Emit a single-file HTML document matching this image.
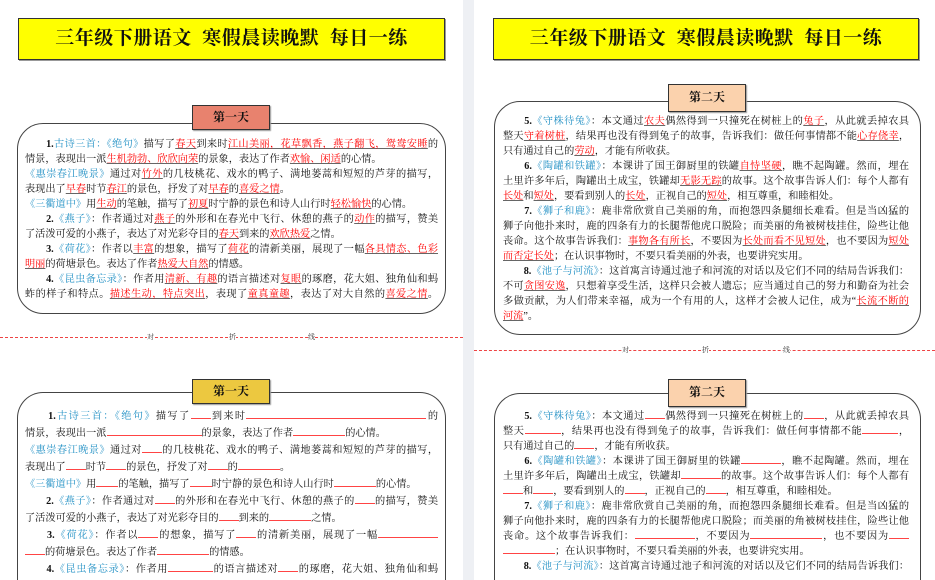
<!DOCTYPE html>
<html><head><meta charset="utf-8"><style>
*{margin:0;padding:0;box-sizing:border-box}
html,body{width:935px;height:580px;overflow:hidden}
body{background:#fff;position:relative;font-family:"Liberation Serif","Noto Serif CJK SC",serif;color:#111}
.strip{position:absolute;left:463px;top:0;width:11px;height:580px;background:#eef0f4}
.title{position:absolute;height:42px;background:#ffff00;border:1.5px solid #333;box-shadow:1px 1px 0 #999;font-size:19px;font-weight:bold;text-align:center;line-height:40px;letter-spacing:0.5px}
.label{position:absolute;width:78px;height:25px;border:1.5px solid #333;box-shadow:1px 1px 1px #999;font-size:12px;font-weight:bold;text-align:center;line-height:22px;z-index:2}
.panel{position:absolute;border:1.5px solid #444;border-radius:26px;background:#fff}
.panel.open{border-bottom:none;border-radius:26px 26px 0 0}
.txt{position:absolute;font-size:10.2px;overflow:hidden}
.txt div{white-space:nowrap;text-align:justify;text-align-last:justify}
.txt div.l{text-align-last:left}
.b{color:#1f8fc4}
.r{color:#f00;text-decoration:underline;text-decoration-color:#666}
.u{display:inline-block;border-bottom:1px solid #f44;height:10px;vertical-align:baseline}
.dash{position:absolute;height:0;border-top:1px dashed #e44}
.fold{position:absolute;font-size:7px;color:#333}
</style></head><body>
<div class="strip"></div>

<div class="title" style="left:18px;top:18px;width:427px">三年级下册语文&nbsp;&nbsp;寒假晨读晚默&nbsp;&nbsp;每日一练</div>
<div class="label" style="left:192px;top:105px;background:#e8826e">第一天</div>
<div class="panel" style="left:17px;top:123px;width:429px;height:191px"></div>
<div class="txt" style="left:25px;top:137px;width:413px;line-height:15px">
<div>　　<b>1.</b><span class="b">古诗三首：《绝句》</span>描写了<span class="r">春天</span>到来时<span class="r">江山美丽，花草飘香，燕子翻飞，鸳鸯安睡</span>的</div>
<div class="l">情景，表现出一派<span class="r">生机勃勃、欣欣向荣</span>的景象，表达了作者<span class="r">欢愉、闲适</span>的心情。</div>
<div><span class="b">《惠崇春江晚景》</span>通过对<span class="r">竹外</span>的几枝桃花、戏水的鸭子、满地蒌蒿和短短的芦芽的描写，</div>
<div class="l">表现出了<span class="r">早春</span>时节<span class="r">春江</span>的景色，抒发了对<span class="r">早春</span>的<span class="r">喜爱之情</span>。</div>
<div class="l"><span class="b">《三衢道中》</span>用<span class="r">生动</span>的笔触，描写了<span class="r">初夏</span>时宁静的景色和诗人山行时<span class="r">轻松愉快</span>的心情。</div>
<div>　　<b>2.</b><span class="b">《燕子》</span>：作者通过对<span class="r">燕子</span>的外形和在春光中飞行、休憩的燕子的<span class="r">动作</span>的描写，赞美</div>
<div class="l">了活泼可爱的小燕子，表达了对光彩夺目的<span class="r">春天</span>到来的<span class="r">欢欣热爱</span>之情。</div>
<div>　　<b>3.</b><span class="b">《荷花》</span>：作者以<span class="r">丰富</span>的想象，描写了<span class="r">荷花</span>的清新美丽，展现了一幅<span class="r">各具情态、色彩</span></div>
<div class="l"><span class="r">明丽</span>的荷塘景色。表达了作者<span class="r">热爱大自然</span>的情感。</div>
<div>　　<b>4.</b><span class="b">《昆虫备忘录》</span>：作者用<span class="r">清新、有趣</span>的语言描述对<span class="r">复眼</span>的琢磨，花大姐、独角仙和蚂</div>
<div>蚱的样子和特点。<span class="r">描述生动，特点突出</span>，表现了<span class="r">童真童趣</span>，表达了对大自然的<span class="r">喜爱之情</span>。</div>
</div>

<div class="dash" style="left:0;top:337px;width:463px"></div>
<div class="fold" style="left:147px;top:332px;background:#fff">对</div>
<div class="fold" style="left:229px;top:332px;background:#fff">折</div>
<div class="fold" style="left:308px;top:332px;background:#fff">线</div>

<div class="label" style="left:192px;top:379px;background:#ecc840">第一天</div>
<div class="panel open" style="left:17px;top:392px;width:429px;height:188px"></div>
<div class="txt" style="left:25px;top:408px;width:413px;line-height:17px;height:172px">
<div>　　<b>1.</b><span class="b">古诗三首：《绝句》</span>描写了<span class="u" style="width:20px"></span>到来时<span class="u" style="width:180px"></span>的</div>
<div class="l">情景，表现出一派<span class="u" style="width:95px"></span>的景象，表达了作者<span class="u" style="width:52px"></span>的心情。</div>
<div><span class="b">《惠崇春江晚景》</span>通过对<span class="u" style="width:20px"></span>的几枝桃花、戏水的鸭子、满地蒌蒿和短短的芦芽的描写，</div>
<div class="l">表现出了<span class="u" style="width:20px"></span>时节<span class="u" style="width:20px"></span>的景色，抒发了对<span class="u" style="width:20px"></span>的<span class="u" style="width:42px"></span>。</div>
<div class="l"><span class="b">《三衢道中》</span>用<span class="u" style="width:22px"></span>的笔触，描写了<span class="u" style="width:22px"></span>时宁静的景色和诗人山行时<span class="u" style="width:42px"></span>的心情。</div>
<div>　　<b>2.</b><span class="b">《燕子》</span>：作者通过对<span class="u" style="width:20px"></span>的外形和在春光中飞行、休憩的燕子的<span class="u" style="width:20px"></span>的描写，赞美</div>
<div class="l">了活泼可爱的小燕子，表达了对光彩夺目的<span class="u" style="width:20px"></span>到来的<span class="u" style="width:42px"></span>之情。</div>
<div>　　<b>3.</b><span class="b">《荷花》</span>：作者以<span class="u" style="width:20px"></span>的想象，描写了<span class="u" style="width:20px"></span>的清新美丽，展现了一幅<span class="u" style="width:60px"></span></div>
<div class="l"><span class="u" style="width:20px"></span>的荷塘景色。表达了作者<span class="u" style="width:52px"></span>的情感。</div>
<div>　　<b>4.</b><span class="b">《昆虫备忘录》</span>：作者用<span class="u" style="width:45px"></span>的语言描述对<span class="u" style="width:20px"></span>的琢磨，花大姐、独角仙和蚂</div>
</div>

<div class="title" style="left:493px;top:18px;width:426px">三年级下册语文&nbsp;&nbsp;寒假晨读晚默&nbsp;&nbsp;每日一练</div>
<div class="label" style="left:668px;top:84px;background:#fbd2ad;height:28px;line-height:25px">第二天</div>
<div class="panel" style="left:494px;top:101px;width:427px;height:234px"></div>
<div class="txt" style="left:503px;top:114px;width:406px;line-height:15px">
<div>　　<b>5.</b><span class="b">《守株待兔》</span>：本文通过<span class="r">农夫</span>偶然得到一只撞死在树桩上的<span class="r">兔子</span>，从此就丢掉农具</div>
<div>整天<span class="r">守着树桩</span>，结果再也没有得到兔子的故事，告诉我们：做任何事情都不能<span class="r">心存侥幸</span>，</div>
<div class="l">只有通过自己的<span class="r">劳动</span>，才能有所收获。</div>
<div>　　<b>6.</b><span class="b">《陶罐和铁罐》</span>：本课讲了国王御厨里的铁罐<span class="r">自恃坚硬</span>，瞧不起陶罐。然而，埋在</div>
<div>土里许多年后，陶罐出土成宝，铁罐却<span class="r">无影无踪</span>的故事。这个故事告诉人们：每个人都有</div>
<div class="l"><span class="r">长处</span>和<span class="r">短处</span>，要看到别人的<span class="r">长处</span>，正视自己的<span class="r">短处</span>，相互尊重，和睦相处。</div>
<div>　　<b>7.</b><span class="b">《狮子和鹿》</span>：鹿非常欣赏自己美丽的角，而抱怨四条腿细长难看。但是当凶猛的</div>
<div>狮子向他扑来时，鹿的四条有力的长腿帮他虎口脱险；而美丽的角被树枝挂住，险些让他</div>
<div>丧命。这个故事告诉我们：<span class="r">事物各有所长</span>，不要因为<span class="r">长处而看不见短处</span>，也不要因为<span class="r">短处</span></div>
<div class="l"><span class="r">而否定长处</span>；在认识事物时，不要只看美丽的外表，也要讲究实用。</div>
<div>　　<b>8.</b><span class="b">《池子与河流》</span>：这首寓言诗通过池子和河流的对话以及它们不同的结局告诉我们：</div>
<div>不可<span class="r">贪图安逸</span>，只想着享受生活，这样只会被人遗忘；应当通过自己的努力和勤奋为社会</div>
<div>多做贡献，为人们带来幸福，成为一个有用的人，这样才会被人记住，成为“<span class="r">长流不断的</span></div>
<div class="l"><span class="r">河流</span>”。</div>
</div>

<div class="dash" style="left:474px;top:350px;width:461px"></div>
<div class="fold" style="left:622px;top:345px;background:#fff">对</div>
<div class="fold" style="left:702px;top:345px;background:#fff">折</div>
<div class="fold" style="left:783px;top:345px;background:#fff">线</div>

<div class="label" style="left:668px;top:379px;background:#fbd2ad;height:28px;line-height:25px">第二天</div>
<div class="panel open" style="left:494px;top:393px;width:427px;height:187px"></div>
<div class="txt" style="left:503px;top:409px;width:406px;line-height:15px;height:171px">
<div>　　<b>5.</b><span class="b">《守株待兔》</span>：本文通过<span class="u" style="width:20px"></span>偶然得到一只撞死在树桩上的<span class="u" style="width:20px"></span>，从此就丢掉农具</div>
<div>整天<span class="u" style="width:36px"></span>，结果再也没有得到兔子的故事，告诉我们：做任何事情都不能<span class="u" style="width:36px"></span>，</div>
<div class="l">只有通过自己的<span class="u" style="width:20px"></span>，才能有所收获。</div>
<div>　　<b>6.</b><span class="b">《陶罐和铁罐》</span>：本课讲了国王御厨里的铁罐<span class="u" style="width:40px"></span>，瞧不起陶罐。然而，埋在</div>
<div>土里许多年后，陶罐出土成宝，铁罐却<span class="u" style="width:40px"></span>的故事。这个故事告诉人们：每个人都有</div>
<div class="l"><span class="u" style="width:20px"></span>和<span class="u" style="width:20px"></span>，要看到别人的<span class="u" style="width:20px"></span>，正视自己的<span class="u" style="width:20px"></span>，相互尊重，和睦相处。</div>
<div>　　<b>7.</b><span class="b">《狮子和鹿》</span>：鹿非常欣赏自己美丽的角，而抱怨四条腿细长难看。但是当凶猛的</div>
<div>狮子向他扑来时，鹿的四条有力的长腿帮他虎口脱险；而美丽的角被树枝挂住，险些让他</div>
<div>丧命。这个故事告诉我们：<span class="u" style="width:60px"></span>，不要因为<span class="u" style="width:72px"></span>，也不要因为<span class="u" style="width:20px"></span></div>
<div class="l"><span class="u" style="width:52px"></span>；在认识事物时，不要只看美丽的外表，也要讲究实用。</div>
<div>　　<b>8.</b><span class="b">《池子与河流》</span>：这首寓言诗通过池子和河流的对话以及它们不同的结局告诉我们：</div>
</div>
</body></html>
